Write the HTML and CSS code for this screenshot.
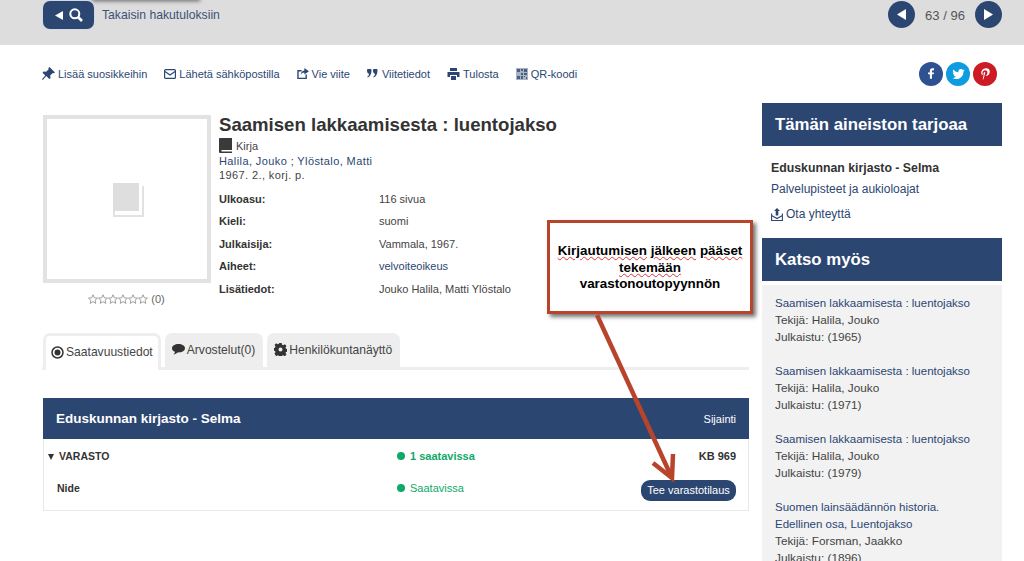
FILE: index.html
```html
<!DOCTYPE html>
<html lang="fi">
<head>
    <meta charset="UTF-8">
    <title>Saamisen lakkaamisesta : luentojakso</title>
    <link rel="stylesheet" href="styles.css">
</head>
<body>
<div class="page">
    <div class="topbar">
        <div class="topbar-left">
            <a class="back-btn">
                <svg width="8" height="9" viewBox="0 0 8 9"><path d="M8 0v9L0 4.500z" fill="#fff"/></svg>
                <svg width="14" height="14" viewBox="0 0 14 14"><circle cx="5.800" cy="5.800" r="4.500" fill="none" stroke="#fff" stroke-width="2"/><path d="M9 9l4 4" stroke="#fff" stroke-width="2.600"/></svg>
            </a>
            <a class="back-link">Takaisin hakutuloksiin</a>
        </div>
        <div class="pager">
            <a class="pager-btn"><svg width="9" height="11" viewBox="0 0 9 11"><path d="M9 0v11L0 5.500z" fill="#fff"/></svg></a>
            <span class="pager-count">63 / 96</span>
            <a class="pager-btn"><svg width="9" height="11" viewBox="0 0 9 11"><path d="M0 0v11l9-5.500z" fill="#fff"/></svg></a>
        </div>
    </div>

    <div class="actions">
        <ul class="action-list">
            <li><svg width="13" height="13" viewBox="0 0 13 13"><path d="M7.500 0L13 5.500l-1.200.8-1-.4L8.200 8.500l.3 2.700-1.200.9-3-3L.8 13 0 12.200 3.300 8.500.5 5.700l1-1.200 2.600.3 2.600-2.600-.4-1z" fill="#2c4672"/></svg>Lisää suosikkeihin</li>
            <li><svg width="12" height="10" viewBox="0 0 12 10"><rect x=".6" y=".6" width="10.800" height="8.800" rx="1" fill="none" stroke="#2c4672" stroke-width="1.200"/><path d="M1 2.500l5 3.500 5-3.500" fill="none" stroke="#2c4672" stroke-width="1.200"/></svg>Lähetä sähköpostilla</li>
            <li><svg width="12" height="11" viewBox="0 0 13 12"><path d="M5 3H1v8.300h9V7" fill="none" stroke="#2c4672" stroke-width="1.500"/><path d="M8 0l5 3.500L8 7V5C6 5 4.500 6 4 8c0-3 1.500-5 4-5.200z" fill="#2c4672"/></svg>Vie viite</li>
            <li><svg width="12" height="9" viewBox="0 0 11 9" preserveAspectRatio="xMinYMid"><path d="M0 1.500a2 2 0 0 1 4.500 0C4.500 5 3 7.500.8 8.500L.3 7.800C1.500 7 2 6 2 4.800 .8 4.800 0 3 0 1.500zM6 1.500a2 2 0 0 1 4.500 0C10.500 5 9 7.500 6.800 8.500l-.5-.7C7.500 7 8 6 8 4.800 6.800 4.800 6 3 6 1.500z" fill="#2c4672"/></svg>Viitetiedot</li>
            <li><svg width="13" height="12" viewBox="0 0 13 12"><path d="M3 0h7v3H3zM.5 4h12v5H10V7H3v2H.5zM4 8h5v4H4z" fill="#2c4672"/></svg>Tulosta</li>
            <li><svg width="12" height="12" viewBox="0 0 12 12"><rect width="12" height="12" fill="#a9b2c3"/><path d="M1 1h3v3H1zM8 1h3v3H8zM1 8h3v3H1zM5 1h2v2H5zM5 5h2v2H5zM8 5h3v2H8zM5 8h2v3H5zM8 8h1v1H8zM10 9h1v2h-1z" fill="#4a5f85"/></svg>QR-koodi</li>
        </ul>
        <div class="social">
            <a class="social-btn fb"><svg width="6" height="11" viewBox="0 0 8 14"><path d="M2.500 14V8H0V5.500h2.500V3.500C2.500 1.200 3.800 0 5.800 0H8v2.500H6.500c-.8 0-1.200.4-1.200 1.200v1.800H8L7.600 8H5.300v6z" fill="#fff"/></svg></a>
            <a class="social-btn tw"><svg width="13" height="10" viewBox="0 0 15 12"><path d="M15 1.500c-.5.300-1.100.4-1.700.5.600-.4 1.100-1 1.300-1.700-.6.400-1.200.6-1.900.8A3 3 0 0 0 7.500 3.800C5 3.700 2.800 2.500 1.100.6c-.8 1.400-.4 3.100.9 4-.5 0-.9-.1-1.300-.4 0 1.500 1 2.700 2.400 3-.4.100-.9.100-1.300 0 .4 1.200 1.500 2.100 2.800 2.100A6 6 0 0 1 0 10.600 8.600 8.600 0 0 0 13.400 3c.6-.4 1.200-.9 1.600-1.500z" fill="#fff"/></svg></a>
            <a class="social-btn pin"><svg width="9" height="12" viewBox="0 0 10 14"><path d="M3.800 8.800C3.400 11 3 12.500 2 14 1.700 12 2.500 10 3 7.600 2.300 6 3.200 4.200 4.300 4.600c1.400.5-1.200 3.400.6 3.800C7 8.800 8 5 6.700 3.500 4.700 1.500 1 3.300 1.500 6.300c.1.700.8 1 .3 1.900C.6 8-.2 6.800 0 5.200.2 2.500 2.500.5 5 .2c3-.3 5 1.200 5 3.700 0 3-1.500 5.300-3.800 5.100-.9 0-1.200-.5-2.400-1z" fill="#fff"/></svg></a>
        </div>
    </div>

    <div class="content">
        <div class="main">
            <div class="record">
                <div class="cover-col">
                    <div class="cover">
                        <svg width="31" height="34" viewBox="0 0 31 34"><path d="M1 1v32h29V3" fill="#fff" stroke="#e2e2e2" stroke-width="2"/><rect width="26" height="28" fill="#dedede"/></svg>
                    </div>
                    <div class="rating">
                        <span class="stars">
                            <svg width="60" height="11" viewBox="0 0 60 11"><defs><path id="star" d="M5 .8l1.300 3 3.200.3-2.400 2.100.7 3.200L5 7.700 2.200 9.400l.7-3.200L.5 4.100l3.200-.3z" fill="none" stroke="#888" stroke-width=".8"/></defs><use href="#star"/><use href="#star" x="10"/><use href="#star" x="20"/><use href="#star" x="30"/><use href="#star" x="40"/><use href="#star" x="50"/></svg>
                        </span>
                        (0)
                    </div>
                </div>
                <div class="info">
                    <h1 class="title">Saamisen lakkaamisesta : luentojakso</h1>
                    <div class="format"><svg width="13" height="15" viewBox="0 0 13 15"><path d="M1 0h12v12H2.500v1.500H13V15H1.500C.5 15 0 14.500 0 13.500V1c0-.6.400-1 1-1z" fill="#3a3a3a"/></svg>Kirja</div>
                    <div class="authors"><a>Halila, Jouko</a> ; <a>Ylöstalo, Matti</a></div>
                    <div class="edition">1967. 2., korj. p.</div>
                    <dl class="meta">
                        <dt>Ulkoasu:</dt><dd>116 sivua</dd>
                        <dt>Kieli:</dt><dd>suomi</dd>
                        <dt>Julkaisija:</dt><dd>Vammala, 1967.</dd>
                        <dt>Aiheet:</dt><dd><a>velvoiteoikeus</a></dd>
                        <dt>Lisätiedot:</dt><dd>Jouko Halila, Matti Ylöstalo</dd>
                    </dl>
                </div>
            </div>

            <div class="tabs">
                <div class="tab active"><svg width="13" height="13" viewBox="0 0 13 13"><circle cx="6.500" cy="6.500" r="5.500" fill="none" stroke="#333" stroke-width="1.500"/><circle cx="6.500" cy="6.500" r="3" fill="#333"/></svg>Saatavuustiedot</div>
                <div class="tab"><svg width="13" height="11" viewBox="0 0 13 11"><path d="M6.500 0C10 0 13 1.800 13 4.200S10 8.400 6.500 8.400L5.500 8.400C4.500 9.500 3 10.200 1.500 10.500 2.300 9.700 2.800 8.800 3 7.800 1.200 7.100 0 5.800 0 4.200 0 1.800 3 0 6.500 0z" fill="#333"/></svg>Arvostelut(0)</div>
                <div class="tab"><svg width="13" height="13" viewBox="0 0 13 13"><path d="M5.300 0h2.400l.4 1.800 1.100.5 1.600-1 1.700 1.700-1 1.600.5 1.100 1.800.4v2.400l-1.800.4-.5 1.100 1 1.600-1.700 1.700-1.600-1-1.100.5-.4 1.800H5.300l-.4-1.800-1.100-.5-1.600 1L.5 10.600l1-1.600-.5-1.100L-.800 7.500V5.100L1 4.700l.5-1.100-1-1.600L2.200.3l1.600 1 1.100-.5zM6.500 4.500a2 2 0 1 0 0 4 2 2 0 0 0 0-4z" fill="#333"/></svg>Henkilökuntanäyttö</div>
            </div>

            <div class="holdings">
                <div class="holdings-head">
                    <span class="holdings-title">Eduskunnan kirjasto - Selma</span>
                    <span class="holdings-loc">Sijainti</span>
                </div>
                <div class="holdings-row row-group">
                    <span class="cell-name"><i class="caret"></i>VARASTO</span>
                    <span class="cell-status strong"><i class="dot"></i>1 saatavissa</span>
                    <span class="cell-place">KB 969</span>
                </div>
                <div class="holdings-row row-item">
                    <span class="cell-name indented">Nide</span>
                    <span class="cell-status"><i class="dot"></i>Saatavissa</span>
                    <span class="cell-place"><a class="order-btn">Tee varastotilaus</a></span>
                </div>
            </div>
        </div>

        <div class="side">
            <h2 class="side-head">Tämän aineiston tarjoaa</h2>
            <div class="provider">
                <div class="provider-name">Eduskunnan kirjasto - Selma</div>
                <a class="provider-link">Palvelupisteet ja aukioloajat</a>
                <a class="provider-contact"><svg width="12" height="13" viewBox="0 0 12 13"><path d="M.6 5.500v7h10.800v-7M.6 7.500l5.400 3 5.400-3" fill="none" stroke="#2c4672" stroke-width="1.100"/><path d="M6 0l3 3H7.300v4.500H4.700V3H3z" fill="#2c4672"/></svg>Ota yhteyttä</a>
            </div>
            <h2 class="side-head">Katso myös</h2>
            <div class="related">
                <div class="related-item">
                    <a>Saamisen lakkaamisesta : luentojakso</a>
                    <div>Tekijä: Halila, Jouko</div>
                    <div>Julkaistu: (1965)</div>
                </div>
                <div class="related-item">
                    <a>Saamisen lakkaamisesta : luentojakso</a>
                    <div>Tekijä: Halila, Jouko</div>
                    <div>Julkaistu: (1971)</div>
                </div>
                <div class="related-item">
                    <a>Saamisen lakkaamisesta : luentojakso</a>
                    <div>Tekijä: Halila, Jouko</div>
                    <div>Julkaistu: (1979)</div>
                </div>
                <div class="related-item">
                    <a>Suomen lainsäädännön historia. Edellinen osa, Luentojakso</a>
                    <div>Tekijä: Forsman, Jaakko</div>
                    <div>Julkaistu: (1896)</div>
                </div>
            </div>
        </div>
    </div>

    <!-- annotation pasted over the screenshot -->
    <div class="callout">
        <p><u>Kirjautumisen</u> <u>jälkeen</u> <u>pääset</u><br><u>tekemään</u><br>varastonoutopyynnön</p>
    </div>
    <svg class="callout-arrow" width="100" height="180" viewBox="0 0 100 180">
        <path d="M10 4l75 163" fill="none" stroke="#b8442c" stroke-width="4.500"/>
        <path d="M66 152l19 15 1-24" fill="none" stroke="#b8442c" stroke-width="4.500"/>
    </svg>
</div>
</body>
</html>
```

FILE: styles.css
```css
* {
    box-sizing: border-box;
}

html, body {
    margin: 0;
    height: 561px;
    overflow: hidden;
}

body {
    font-family: "Liberation Sans", Arial, sans-serif;
    font-size: 11px;
    color: #444;
    background: #fff;
}

a {
    color: #2c4672;
}

.page {
    position: relative;
    height: 561px;
    overflow: hidden;
}

/* top bar */
.topbar {
    position: relative;
    display: flex;
    justify-content: space-between;
    height: 45px;
    padding: 0 22px 0 43px;
    background: #ddd;
}

/* shadow of a menu cut off by the top edge */
.topbar::before {
    content: "";
    position: absolute;
    left: 92px;
    top: -6px;
    width: 108px;
    height: 6px;
    box-shadow: 0 1px 4px #666;
}

.topbar-left {
    position: relative;
    display: flex;
    align-items: flex-start;
}

.back-btn {
    display: flex;
    align-items: center;
    justify-content: center;
    gap: 6px;
    width: 51px;
    height: 28px;
    margin-top: 1px;
    background: #2c4672;
    border-radius: 7px;
    box-shadow: 0 0 0 1px #d3d8e2;
}

.back-link {
    margin: 8px 0 0 8px;
    font-size: 12.200px;
    line-height: 15px;
    color: #3f5078;
}

.pager {
    display: flex;
    align-items: flex-start;
    padding-top: 1px;
}

.pager-btn {
    display: flex;
    align-items: center;
    justify-content: center;
    width: 27px;
    height: 27px;
    background: #2c4672;
    border-radius: 50%;
}

.pager-count {
    width: 60px;
    font-size: 13px;
    line-height: 29px;
    text-align: center;
    color: #555;
}

/* action links */
.actions {
    display: flex;
    justify-content: space-between;
    align-items: center;
    height: 57px;
    padding: 0 27px 0 42px;
}

.action-list {
    display: flex;
    gap: 17px;
    margin: 0;
    padding: 0;
    list-style: none;
    color: #2c4672;
}

.action-list li {
    display: flex;
    align-items: center;
    gap: 3px;
    line-height: 14px;
}

.social {
    display: flex;
    gap: 3px;
}

.social-btn {
    display: flex;
    align-items: center;
    justify-content: center;
    width: 24px;
    height: 24px;
    border-radius: 50%;
}

.fb { background: #2e5192; }
.tw { background: #0e9ce0; }
.pin { background: #cc1b24; }

/* layout */
.content {
    display: flex;
    gap: 13px;
    padding: 1px 22px 0 42px;
}

.main {
    width: 707px;
    padding-top: 12px;
}

.side {
    width: 240px;
}

/* record */
.record {
    display: flex;
    height: 218px;
}

.cover-col {
    width: 169px;
    margin-right: 8px;
}

.cover {
    display: flex;
    align-items: center;
    justify-content: center;
    width: 168px;
    height: 168px;
    margin-left: 1px;
    padding: 2px 0 0 3px;
    border: 4px solid #e2e2e2;
}

.rating {
    display: flex;
    align-items: center;
    justify-content: center;
    gap: 3px;
    margin-top: 10px;
    line-height: 13px;
    color: #666;
}

.stars {
    display: flex;
}

.info {
    flex: 1;
}

.title {
    margin: -1px 0 0;
    font-size: 18.600px;
    line-height: 22px;
    font-weight: bold;
    color: #333;
}

.format {
    display: flex;
    align-items: center;
    gap: 4px;
    height: 15px;
    margin-top: 2px;
}

.authors, .edition {
    line-height: 15px;
    letter-spacing: .4px;
}

.authors {
    padding-top: 1px;
}

.edition {
    margin-top: -1px;
}

.meta {
    display: grid;
    grid-template-columns: 160px 1fr;
    grid-auto-rows: 22.400px;
    margin: 5px 0 0;
    line-height: 22.400px;
}

.meta dt {
    font-weight: bold;
    color: #333;
}

.meta dd {
    margin: 0;
}

/* tabs */
.tabs {
    display: flex;
    gap: 4px;
    height: 37px;
    border-bottom: 3px solid #eee;
}

.tab {
    display: flex;
    align-items: center;
    gap: 2px;
    height: 34px;
    padding: 0 8px 1px 7px;
    font-size: 12.100px;
    line-height: 14px;
    background: #eee;
    border-radius: 7px 7px 0 0;
}

.tab.active {
    height: 37px;
    margin-left: 1px;
    padding: 0 5px 2px;
    background: #fff;
    border: 3px solid #eee;
    border-bottom: 0;
}

/* holdings */
.holdings {
    height: 113px;
    margin: 28px 0 0 1px;
    border: 1px solid #e8e8e8;
    border-top: 0;
}

.holdings-head {
    display: flex;
    justify-content: space-between;
    align-items: center;
    height: 41px;
    margin: 0 -1px;
    padding: 0 13px;
    color: #fff;
    background: #2c4672;
}

.holdings-title {
    font-size: 13.500px;
    font-weight: bold;
}

.holdings-row {
    display: flex;
    align-items: center;
}

.row-group {
    height: 32px;
    padding: 2px 12px 0 4px;
}

.row-item {
    height: 34px;
    padding: 0 12px 0 4px;
}

.cell-name {
    width: 349px;
    font-size: 10.500px;
    font-weight: bold;
    color: #333;
}

.indented {
    padding-left: 9px;
}

.caret {
    display: inline-block;
    width: 0;
    height: 0;
    margin-right: 5px;
    border-left: 3.500px solid transparent;
    border-right: 3.500px solid transparent;
    border-top: 6px solid #333;
}

.cell-status {
    display: flex;
    align-items: center;
    gap: 5px;
    color: #0fa968;
}

.cell-status.strong {
    font-weight: bold;
}

.dot {
    width: 8px;
    height: 8px;
    background: #0fa968;
    border-radius: 50%;
}

.cell-place {
    margin-left: auto;
    font-weight: bold;
    color: #333;
}

.order-btn {
    display: block;
    width: 95px;
    height: 21px;
    margin-top: 4px;
    font-weight: normal;
    line-height: 21px;
    text-align: center;
    color: #fff;
    background: #2c4672;
    border-radius: 9px;
}

/* sidebar */
.side-head {
    height: 43px;
    margin: 0;
    padding-left: 13px;
    font-size: 16.800px;
    line-height: 43px;
    font-weight: bold;
    color: #fff;
    background: #2c4672;
}

.provider {
    height: 92px;
    padding: 15px 9px 0;
    font-size: 12px;
}

.provider-name {
    font-size: 12.300px;
    font-weight: bold;
    line-height: 15px;
    color: #333;
}

.provider-link {
    display: block;
    margin-top: 6px;
    line-height: 15px;
}

.provider-contact {
    display: flex;
    align-items: center;
    gap: 3px;
    margin-top: 10px;
    line-height: 15px;
}

.related {
    margin-top: 4px;
    padding: 10px 13px;
    font-size: 11.800px;
    line-height: 17px;
    background: #f2f2f2;
}

.related-item {
    margin-bottom: 17px;
}

.related-item a {
    font-size: 11.500px;
}

/* annotation */
.callout {
    position: absolute;
    left: 547px;
    top: 220px;
    display: flex;
    align-items: center;
    justify-content: center;
    width: 206px;
    height: 94px;
    padding-top: 2px;
    font-size: 13.400px;
    font-weight: bold;
    line-height: 16.500px;
    text-align: center;
    color: #000;
    background: #fff;
    border: 3px solid #b8442c;
    box-shadow: 3px 3px 4px #777;
}

.callout p {
    margin: 0;
}

.callout u {
    text-decoration: underline wavy #d33;
    text-decoration-thickness: 1px;
}

.callout-arrow {
    position: absolute;
    left: 587px;
    top: 311px;
}
```
